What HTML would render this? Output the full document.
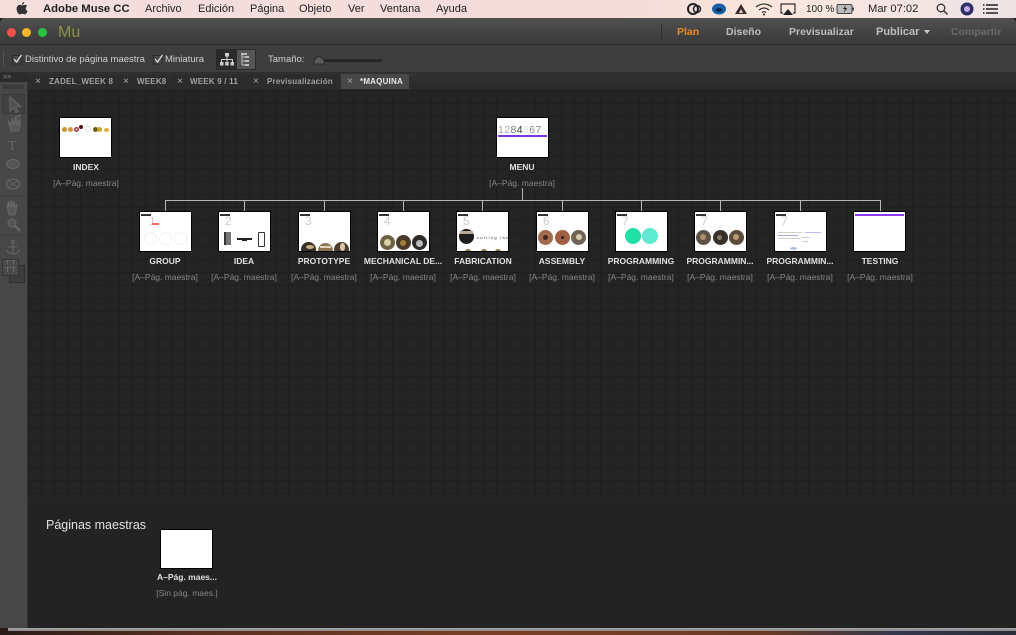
<!DOCTYPE html>
<html><head><meta charset="utf-8"><style>
html,body{margin:0;padding:0}
body{width:1016px;height:635px;overflow:hidden;position:relative;background:#222;font-family:"Liberation Sans",sans-serif}
div,span,svg{position:absolute;white-space:nowrap}
.mb{top:2px;font-size:11px;line-height:14px;color:#222}
.nv{top:25px;font-size:10.5px;line-height:14px;font-weight:bold;color:#bdbdbd}
.tb{top:53px;font-size:9.5px;line-height:13px;color:#cfcfcf}
.tab{top:74px;height:15px;background:#2c2c2c;font-size:8px;line-height:15px;font-weight:bold;color:#a0a0a0;letter-spacing:.2px}
.tab i{position:absolute;left:6px;font-style:normal;font-weight:normal;color:#aaa;font-size:10px}
.tab b{position:absolute;left:20px;font-weight:bold}
.th{width:51px;height:39px;background:#fff;box-shadow:0 0 0 1px #000;overflow:hidden;filter:blur(.35px)}
.n{width:90px;text-align:center;font-size:8.5px;line-height:11px;font-weight:bold;color:#e0e0e0}
.s{width:90px;text-align:center;font-size:8.5px;line-height:11px;color:#858585}
.ln{background:#b5b5b5}
.d{left:1px;top:2px;width:10px;height:2px;background:#333}
.g{left:6px;top:4px;font-size:12px;line-height:11px;color:#ccc}
.c{border-radius:50%}
</style></head><body>
<!-- menu bar -->
<div style="left:0;top:0;width:1016px;height:18px;background:linear-gradient(90deg,#f4dfdc,#f3dcd9 60%,#fbe6dc 75%,#eee4e6)"></div>
<svg style="left:16px;top:2px" width="12" height="13" viewBox="0 0 12 13"><path d="M8.200 0c.1 1.300-1 2.600-2.300 2.600C5.800 1.300 7 .1 8.200 0zM6 3.400c.6 0 1.500-.7 2.700-.7 1 0 1.900.5 2.500 1.300-2.100 1.200-1.800 4.100.4 5-.6 1.500-1.700 3.400-3 3.400-.9 0-1.200-.6-2.300-.6s-1.500.6-2.300.6C2.300 12.400.6 9.500.6 7c0-2.600 1.700-4.200 3.300-4.200 1 0 1.700.6 2.100.6z" fill="#333"/></svg>
<div class="mb" style="left:43px;font-weight:bold;font-size:11.300px">Adobe Muse CC</div>
<div class="mb" style="left:145px">Archivo</div>
<div class="mb" style="left:198px">Edición</div>
<div class="mb" style="left:250px">Página</div>
<div class="mb" style="left:299px">Objeto</div>
<div class="mb" style="left:348px">Ver</div>
<div class="mb" style="left:380px">Ventana</div>
<div class="mb" style="left:436px">Ayuda</div>
<svg style="left:686px;top:1px" width="330" height="16" viewBox="0 0 330 16">
<circle cx="7" cy="8" r="5" fill="none" stroke="#222" stroke-width="2"/><circle cx="11" cy="8" r="3.500" fill="none" stroke="#222" stroke-width="1.500"/>
<ellipse cx="33" cy="8" rx="7" ry="5.500" fill="#1a5fa8"/><ellipse cx="33" cy="9" rx="3.500" ry="2" fill="#0b2c55"/>
<path d="M55 3l6 10H49z" fill="#3a2a2a"/><path d="M55 8l2 4h-4z" fill="#e8d8d4"/>
<path d="M70 6q8-6 16 0M73 9q5-4 10 0M76 11.500q2-1.500 4 0" fill="none" stroke="#333" stroke-width="1.200"/><circle cx="78" cy="13.500" r="1" fill="#333"/>
<path d="M97 12h-2V3h14v9h-2" fill="none" stroke="#333" stroke-width="1.200"/><path d="M102 8l5 6H97z" fill="#222"/>
<rect x="151" y="3.500" width="15" height="9" rx="1.500" fill="#bbb" stroke="#444"/><rect x="166.500" y="6.500" width="1.500" height="3" fill="#444"/><path d="M160 4l-3 4h2l-1 4 3-5h-2z" fill="#222"/>
<circle cx="255" cy="7" r="3.800" fill="none" stroke="#333" stroke-width="1.300"/><path d="M258 10l3.500 3.500" stroke="#333" stroke-width="1.500"/>
<circle cx="281" cy="8" r="6.500" fill="#2a2f6a"/><circle cx="281" cy="8" r="3" fill="#c8a8e8"/>
<path d="M300 4h12M300 8h12M300 12h12" stroke="#222" stroke-width="1.400"/><path d="M297 4h1.500M297 8h1.500M297 12h1.500" stroke="#222" stroke-width="1.400"/>
</svg>
<div class="mb" style="left:806px;top:2px;font-size:10px;line-height:15px">100 %</div>
<div class="mb" style="left:868px;font-size:11.200px">Mar 07:02</div>
<!-- title bar -->
<div style="left:0;top:18px;width:1016px;height:27px;background:linear-gradient(#505050,#3a3a3a);border-radius:5px 5px 0 0;box-sizing:border-box;border-bottom:1px solid #2a2a2a"></div>
<div class="c" style="left:7px;top:28px;width:9px;height:9px;background:#f1534b"></div>
<div class="c" style="left:22px;top:28px;width:9px;height:9px;background:#f8b62d"></div>
<div class="c" style="left:38px;top:28px;width:9px;height:9px;background:#29c13f"></div>
<div style="left:58px;top:23px;font-size:16px;line-height:19px;color:#8c8f48">Mu</div>
<div style="left:661px;top:24px;width:1px;height:16px;background:#2f2f2f"></div>
<div class="nv" style="left:677px;color:#e68a2e">Plan</div>
<div class="nv" style="left:726px">Diseño</div>
<div class="nv" style="left:789px">Previsualizar</div>
<div class="nv" style="left:876px;font-size:11px">Publicar</div>
<div style="left:924px;top:30px;width:0;height:0;border:3px solid transparent;border-top:4px solid #ccc"></div>
<div class="nv" style="left:951px;color:#6b6b6b">Compartir</div>
<!-- toolbar -->
<div style="left:0;top:45px;width:1016px;height:28px;background:#3e3e3e;box-sizing:border-box;border-bottom:1px solid #2e2e2e"></div>
<div style="left:3px;top:51px;width:1px;height:16px;background:#555"></div>
<svg style="left:12px;top:54px" width="12" height="11" viewBox="0 0 12 11"><rect x=".5" y="1.500" width="8.500" height="8.500" fill="#484848" stroke="#2a2a2a"/><path d="M2 5l2.500 3L9.500 1" fill="none" stroke="#ddd" stroke-width="1.300"/></svg>
<div class="tb" style="left:25px">Distintivo de página maestra</div>
<svg style="left:153px;top:54px" width="12" height="11" viewBox="0 0 12 11"><rect x=".5" y="1.500" width="8.500" height="8.500" fill="#484848" stroke="#2a2a2a"/><path d="M2 5l2.500 3L9.500 1" fill="none" stroke="#ddd" stroke-width="1.300"/></svg>
<div class="tb" style="left:165px">Miniatura</div>
<div style="left:216px;top:49px;width:40px;height:21px;background:#2a2a2a"></div>
<div style="left:237px;top:50px;width:18px;height:19px;background:#555"></div>
<svg style="left:219px;top:53px" width="34" height="14" viewBox="0 0 34 14"><path d="M8 2v4M2.500 10V6.500h11V10M8 6v4" fill="none" stroke="#ccc"/><rect x="6" y="0" width="4" height="3.500" fill="#ccc"/><rect x="1" y="9" width="3.500" height="3.500" fill="#ccc"/><rect x="6.200" y="9" width="3.500" height="3.500" fill="#ccc"/><rect x="11.500" y="9" width="3.500" height="3.500" fill="#ccc"/><path d="M23 1v11M23 4h3M23 8h3M23 12h3" stroke="#bbb" fill="none"/><rect x="22" y="0" width="6" height="2" fill="#bbb"/><rect x="26" y="3" width="4" height="2" fill="#bbb"/><rect x="26" y="7" width="4" height="2" fill="#bbb"/><rect x="26" y="11" width="4" height="2" fill="#bbb"/></svg>
<div class="tb" style="left:268px">Tamaño:</div>
<div style="left:316px;top:59px;width:66px;height:3px;background:#262626;border-radius:2px"></div>
<svg style="left:313px;top:55px" width="12" height="10"><path d="M1 9V5l5-4 5 4v4z" fill="#5a5a5a" stroke="#2a2a2a"/></svg>
<!-- tabs -->
<div style="left:0;top:73px;width:1016px;height:17px;background:linear-gradient(#323232,#2a2a2a)"></div>
<div style="left:0;top:73px;width:28px;height:9px;background:#2b2b2b"></div>
<div style="left:3px;top:73px;font-size:7px;line-height:9px;color:#999">&gt;&gt;</div>
<div class="tab" style="left:29px;width:87px"><i>×</i><b>ZADEL_WEEK 8</b></div>
<div class="tab" style="left:117px;width:52px"><i>×</i><b>WEEK8</b></div>
<div class="tab" style="left:171px;width:75px"><i>×</i><b style="left:19px">WEEK 9 / 11</b></div>
<div class="tab" style="left:247px;width:92px"><i>×</i><b>Previsualización</b></div>
<div class="tab" style="left:341px;width:68px;background:#474747;color:#e6e6e6"><i>×</i><b style="left:19px">*MAQUINA</b></div>
<!-- left tools -->
<div style="left:0;top:82px;width:28px;height:546px;background:#474747;border-right:1px solid #333;box-sizing:border-box"></div>
<div style="left:3px;top:85px;width:21px;height:4px;background:#3a3a3a"></div>
<div style="left:3px;top:95px;width:21px;height:18px;background:#414141;box-shadow:0 0 0 1px #3a3a3a"></div>
<svg style="left:0;top:90px" width="28" height="200" viewBox="0 0 28 200" fill="none" stroke="#666" stroke-width="1.100">
<path d="M10 7v14l3.500-3.500 2.500 5 2-1-2.500-5h5z" fill="#4f4f4f"/>
<path d="M8 30l3 6 1-8 2 6 2-7 1 7 3-4v6l-2 5h-7z" fill="#5a5a5a"/><path d="M15 27l5-2-2 5 2 4-5-1z"/>
<text x="8" y="60" font-family="Liberation Serif" font-size="14" fill="#686868" stroke="none">T</text>
<ellipse cx="13" cy="74" rx="6.500" ry="4.500" fill="#555"/>
<ellipse cx="13" cy="94" rx="6.500" ry="5"/><path d="M8 90l10 8M18 90L8 98"/>
<path d="M8 120l-1-6 2 3-1-6 3 5v-6l2 6 1-5 1 6 2-3-1 6-1 5h-6z" fill="#5a5a5a"/>
<circle cx="12" cy="133" r="4" fill="#555"/><path d="M15 136l5 5" stroke-width="2.500"/>
<circle cx="13" cy="152" r="1.500"/><path d="M13 154v10M9 157h8M7 160q1 4 6 4 5 0 6-4"/>
<path d="M1 106h27M1 145h27" stroke="#3d3d3d"/>
</svg>
<div style="left:9px;top:265px;width:16px;height:18px;background:#3d3d3d;box-sizing:border-box;border:1px solid #2e2e2e"></div>
<div style="left:2px;top:259px;width:17px;height:17px;background:#4a4a4a;box-sizing:border-box;border:1px solid #333;color:#777;font-size:7px;line-height:7px;text-align:center;white-space:normal">T T<br>T T</div>
<!-- canvas -->
<div style="left:28px;top:90px;width:988px;height:411px;background-color:#242424;background-image:linear-gradient(#1f1f1f 1px,transparent 1px),linear-gradient(90deg,#1f1f1f 1px,transparent 1px);background-size:13px 13px"></div>
<div style="left:28px;top:501px;width:988px;height:127px;background:#232323"></div>
<!-- connectors -->
<div class="ln" style="left:522px;top:188px;width:1px;height:12px"></div>
<div class="ln" style="left:165px;top:200px;width:716px;height:1px"></div>
<div class="ln" style="left:165px;top:200px;width:1px;height:12px"></div>
<div class="ln" style="left:244px;top:200px;width:1px;height:12px"></div>
<div class="ln" style="left:324px;top:200px;width:1px;height:12px"></div>
<div class="ln" style="left:403px;top:200px;width:1px;height:12px"></div>
<div class="ln" style="left:482px;top:200px;width:1px;height:12px"></div>
<div class="ln" style="left:562px;top:200px;width:1px;height:12px"></div>
<div class="ln" style="left:641px;top:200px;width:1px;height:12px"></div>
<div class="ln" style="left:720px;top:200px;width:1px;height:12px"></div>
<div class="ln" style="left:800px;top:200px;width:1px;height:12px"></div>
<div class="ln" style="left:880px;top:200px;width:1px;height:12px"></div>
<!-- INDEX -->
<div class="th" style="left:60px;top:118px">
<div class="c" style="left:2px;top:9px;width:5px;height:5px;background:#c9962e"></div><div class="c" style="left:8px;top:9px;width:5px;height:5px;background:#d39a35"></div><div class="c" style="left:14px;top:9px;width:5px;height:5px;background:#fff;box-shadow:inset 0 0 0 1.500px #a33"></div><div class="c" style="left:19px;top:7px;width:4px;height:4px;background:#511"></div><div class="c" style="left:25px;top:8px;width:6px;height:6px;box-shadow:inset 0 0 0 1px #ddd"></div><div class="c" style="left:33px;top:9px;width:5px;height:5px;background:#6a5a1a"></div><div class="c" style="left:37px;top:9px;width:5px;height:5px;background:#c9a92e"></div><div class="c" style="left:44px;top:10px;width:5px;height:4px;background:#d9b040"></div>
</div>
<div class="n" style="left:41px;top:162px">INDEX</div><div class="s" style="left:41px;top:178px">[A–Pág. maestra]</div>
<!-- MENU -->
<div class="th" style="left:497px;top:118px">
<div style="left:1px;top:6px;font-size:10.500px;line-height:12px;letter-spacing:.4px;color:#aaa">12<span style="position:static;color:#777">8</span><span style="position:static;color:#333">4</span><span style="position:static;color:#ddd">6</span><span style="position:static;color:#888">67</span></div>
<div style="left:1px;top:17px;width:49px;height:2px;background:#7a35e0"></div>
</div>
<div class="n" style="left:477px;top:162px">MENU</div><div class="s" style="left:477px;top:178px">[A–Pág. maestra]</div>
<!-- children -->
<div class="th" style="left:140px;top:212px"><div class="d"></div><div class="g" style="left:9px">1</div><div style="left:12px;top:11px;width:7px;height:2px;background:#f06a6a"></div><div class="c" style="left:4px;top:20px;width:13px;height:13px;box-shadow:inset 0 0 0 1px #eef2f4"></div><div class="c" style="left:19px;top:20px;width:13px;height:13px;box-shadow:inset 0 0 0 1px #eef2f4"></div><div class="c" style="left:34px;top:20px;width:13px;height:13px;box-shadow:inset 0 0 0 1px #eef2f4"></div></div>
<div class="n" style="left:120px;top:256px">GROUP</div><div class="s" style="left:120px;top:272px">[A–Pág. maestra]</div>
<div class="th" style="left:219px;top:212px"><div class="d"></div><div class="g">2</div><div style="left:5px;top:20px;width:7px;height:13px;background:#777;box-shadow:inset 2px 0 0 #333"></div><div style="left:18px;top:26px;width:15px;height:1.500px;background:#222"></div><div style="left:23px;top:27px;width:5px;height:2px;background:#222"></div><div style="left:39px;top:20px;width:5px;height:13px;border:1px solid #333;border-radius:1px"></div></div>
<div class="n" style="left:199px;top:256px">IDEA</div><div class="s" style="left:199px;top:272px">[A–Pág. maestra]</div>
<div class="th" style="left:299px;top:212px"><div class="d"></div><div class="g">3</div><div class="c" style="left:2px;top:30px;width:15px;height:15px;background:#3a3128"></div><div class="c" style="left:7px;top:33px;width:8px;height:4px;background:#c9b388"></div><div class="c" style="left:19px;top:31px;width:15px;height:15px;background:#8d7550"></div><div style="left:21px;top:34px;width:11px;height:2px;background:#e0d6bd"></div><div class="c" style="left:35px;top:30px;width:15px;height:15px;background:#4a3d2c"></div><div class="c" style="left:41px;top:31px;width:5px;height:8px;background:#d9cba8"></div></div>
<div class="n" style="left:279px;top:256px">PROTOTYPE</div><div class="s" style="left:279px;top:272px">[A–Pág. maestra]</div>
<div class="th" style="left:378px;top:212px"><div class="d"></div><div class="g">4</div><div class="c" style="left:2px;top:23px;width:15px;height:15px;background:#6b6242"></div><div class="c" style="left:6px;top:27px;width:7px;height:7px;background:#d9d0a8"></div><div class="c" style="left:18px;top:23px;width:15px;height:15px;background:#4a3a2c"></div><div class="c" style="left:22px;top:28px;width:6px;height:6px;background:#a5803a"></div><div class="c" style="left:34px;top:23px;width:15px;height:15px;background:#2e2a28"></div><div class="c" style="left:38px;top:28px;width:7px;height:7px;background:#bbb"></div></div>
<div class="n" style="left:358px;top:256px">MECHANICAL DE...</div><div class="s" style="left:358px;top:272px">[A–Pág. maestra]</div>
<div class="th" style="left:457px;top:212px"><div class="d"></div><div class="g">5</div><div class="c" style="left:2px;top:17px;width:15px;height:15px;background:#1c1c1c"></div><div style="left:3px;top:19px;width:13px;height:3px;background:#b5a898"></div><div style="left:20px;top:23px;font-size:4px;line-height:5px;letter-spacing:1.300px;color:#333">cutting laser</div><div class="c" style="left:8px;top:37px;width:6px;height:6px;background:#8a7a2a"></div><div class="c" style="left:24px;top:37px;width:6px;height:6px;background:#8a7a2a"></div><div class="c" style="left:38px;top:37px;width:6px;height:6px;background:#8a7a2a"></div></div>
<div class="n" style="left:438px;top:256px">FABRICATION</div><div class="s" style="left:438px;top:272px">[A–Pág. maestra]</div>
<div class="th" style="left:537px;top:212px"><div class="d"></div><div class="g">6</div><div class="c" style="left:1px;top:18px;width:15px;height:15px;background:#a56a4e"></div><div class="c" style="left:6px;top:23px;width:5px;height:5px;background:#3d2a22"></div><div class="c" style="left:18px;top:18px;width:15px;height:15px;background:#a05f43"></div><div class="c" style="left:24px;top:24px;width:3px;height:3px;background:#2d1a12"></div><div class="c" style="left:34px;top:18px;width:15px;height:15px;background:#6e6354"></div><div class="c" style="left:39px;top:22px;width:6px;height:6px;background:#d9c9b0"></div></div>
<div class="n" style="left:517px;top:256px">ASSEMBLY</div><div class="s" style="left:517px;top:272px">[A–Pág. maestra]</div>
<div class="th" style="left:616px;top:212px"><div class="d"></div><div class="g">7</div><div class="c" style="left:9px;top:16px;width:16px;height:16px;background:#20e0a8"></div><div class="c" style="left:26px;top:16px;width:16px;height:16px;background:#5cebd2"></div></div>
<div class="n" style="left:596px;top:256px">PROGRAMMING</div><div class="s" style="left:596px;top:272px">[A–Pág. maestra]</div>
<div class="th" style="left:695px;top:212px"><div class="d"></div><div class="g">7</div><div class="c" style="left:1px;top:18px;width:15px;height:15px;background:#5d5248"></div><div class="c" style="left:5px;top:22px;width:6px;height:6px;background:#b08e6a"></div><div class="c" style="left:18px;top:18px;width:15px;height:15px;background:#35302c"></div><div class="c" style="left:22px;top:23px;width:5px;height:5px;background:#8a7a68"></div><div class="c" style="left:34px;top:18px;width:15px;height:15px;background:#5c4a3a"></div><div class="c" style="left:38px;top:22px;width:6px;height:6px;background:#b59a78"></div></div>
<div class="n" style="left:675px;top:256px">PROGRAMMIN...</div><div class="s" style="left:675px;top:272px">[A–Pág. maestra]</div>
<div class="th" style="left:775px;top:212px"><div class="d"></div><div class="g">7</div><div style="left:3px;top:20px;width:24px;height:1px;background:#ccc"></div><div style="left:30px;top:20px;width:16px;height:1px;background:#b9b9ee"></div><div style="left:3px;top:23px;width:20px;height:1px;background:#a9a9e8"></div><div style="left:3px;top:26px;width:22px;height:1px;background:#ccc"></div><div style="left:27px;top:25px;width:8px;height:1px;background:#ccc"></div><div style="left:27px;top:29px;width:6px;height:1px;background:#ccc"></div><div style="left:15px;top:35px;width:7px;height:3px;background:#a9c3e8;border-radius:50%"></div></div>
<div class="n" style="left:755px;top:256px">PROGRAMMIN...</div><div class="s" style="left:755px;top:272px">[A–Pág. maestra]</div>
<div class="th" style="left:854px;top:212px"><div style="left:1px;top:2px;width:49px;height:2px;background:#8a3bef"></div></div>
<div class="n" style="left:835px;top:256px">TESTING</div><div class="s" style="left:835px;top:272px">[A–Pág. maestra]</div>
<!-- masters -->
<div style="left:46px;top:518px;font-size:12.500px;line-height:15px;color:#e2e2e2">Páginas maestras</div>
<div class="th" style="left:161px;top:530px;height:38px"></div>
<div class="n" style="left:142px;top:572px">A–Pág. maes...</div>
<div class="s" style="left:142px;top:588px">[Sin pág. maes.]</div>
<!-- bottom -->
<div style="left:0;top:628px;width:8px;height:7px;background:#2a1c18"></div>
<div style="left:8px;top:628px;width:1008px;height:3px;background:linear-gradient(#a8a8a8,#888)"></div>
<div style="left:0;top:631px;width:1016px;height:4px;background:linear-gradient(90deg,#2a1c18,#5a3020 20%,#7a4026 50%,#6a3a24 75%,#35384a 88%,#2a2c38)"></div>
</body></html>
